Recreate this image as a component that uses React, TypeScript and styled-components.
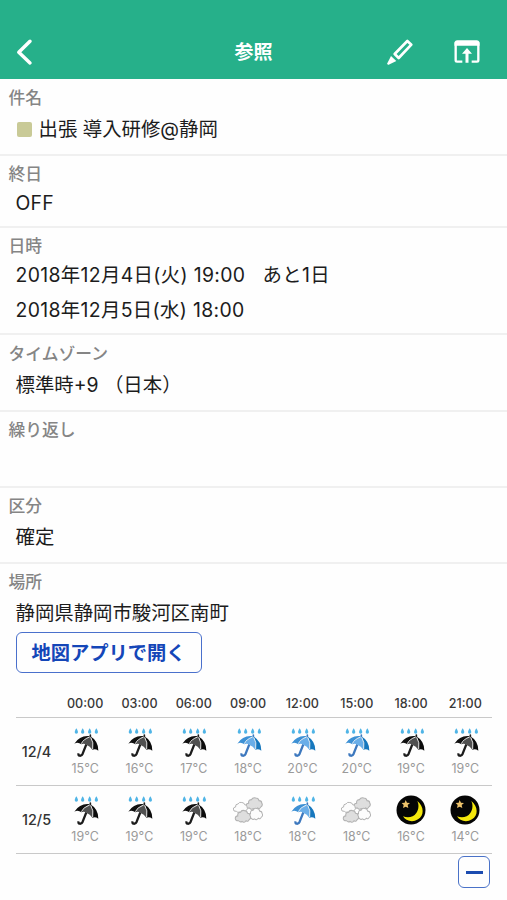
import React from "react";
import styled, { createGlobalStyle } from "styled-components";

const GlobalStyle = createGlobalStyle`
  body {
    margin: 0;
    background: #fefefe;
    color: #1c1c1c;
    font-family: Inter, "Noto Sans CJK JP", sans-serif;
  }
`;

const Screen = styled.div`
  width: 507px;
  height: 900px;
  overflow: hidden;
  background: #fefefe;
`;

const Header = styled.header`
  display: grid;
  grid-template-columns: 1fr auto 1fr;
  align-items: center;
  box-sizing: border-box;
  height: 79px;
  padding: 25px 27px 0 16px;
  background: #26b08a;
  color: #fff;
`;

const Title = styled.h1`
  margin: 2px -11px 0 0;
  font-size: 19px;
  font-weight: 700;
  line-height: 28px;
`;

const Actions = styled.div`
  display: flex;
  justify-content: flex-end;
  align-items: center;
  gap: 40px;
`;

const IconButton = styled.button`
  display: flex;
  padding: 0;
  border: 0;
  background: none;
  color: inherit;
  justify-self: start;
`;

const Section = styled.section<{ $height?: number; $top?: number }>`
  box-sizing: border-box;
  height: ${(p) => (p.$height ? `${p.$height}px` : "auto")};
  padding: ${(p) => p.$top ?? 6}px 15px 0 8.5px;
  border-bottom: ${(p) => (p.$height ? "2px solid #f0f0f0" : "0")};
`;

const Label = styled.h2`
  margin: 0;
  font-size: 16.8px;
  font-weight: 500;
  line-height: 24px;
  color: #858585;
`;

const Value = styled.div<{ $spacing?: number; $gap?: number }>`
  display: flex;
  align-items: center;
  height: 28px;
  margin: ${(p) => p.$gap ?? 5}px 0 0 7px;
  font-size: 19.4px;
  letter-spacing: ${(p) => p.$spacing ?? 0}px;
  line-height: 28px;
  white-space: pre;
`;

const Swatch = styled.span`
  width: 15px;
  height: 15px;
  margin: 0 7px 0 1px;
  border-radius: 2px;
  background: #c9ca97;
`;

const Remaining = styled.span`
  margin-left: 17px;
`;

const MapButton = styled.button`
  display: block;
  box-sizing: border-box;
  width: 186px;
  height: 41px;
  margin: 5px 0 0 7px;
  padding: 0 0 1px;
  border: 1.5px solid #4a70cc;
  border-radius: 6px;
  background: #fefefe;
  color: #1446b8;
  font-family: inherit;
  font-size: 19.3px;
  font-weight: 700;
`;

const Forecast = styled.div`
  margin: 16px 0 0 7px;
`;

const ForecastRow = styled.div<{ $head?: boolean }>`
  display: grid;
  grid-template-columns: 42px repeat(8, 1fr);
  align-items: center;
  box-sizing: border-box;
  height: ${(p) => (p.$head ? 29 : 68)}px;
  border-bottom: 1.5px solid #c9c9c9;
`;

const Hour = styled.span`
  padding-left: 1px;
  font-size: 12.6px;
  font-weight: 500;
  color: #383838;
  text-align: center;
`;

const Day = styled.span`
  font-size: 14.4px;
  font-weight: 500;
  text-align: center;
  color: #333;
`;

const Cell = styled.div`
  display: flex;
  flex-direction: column;
  align-items: center;
  gap: 4px;
  padding-top: 1px;
`;

const Temperature = styled.span`
  padding-left: 1px;
  font-size: 12.4px;
  line-height: 16px;
  letter-spacing: 0.1px;
  color: #9a9a9a;
`;

const Footer = styled.div`
  display: flex;
  justify-content: flex-end;
  padding: 2px 2px 0 0;
`;

const CollapseButton = styled.button`
  display: flex;
  align-items: center;
  justify-content: center;
  box-sizing: border-box;
  width: 32px;
  height: 32px;
  padding: 0;
  border: 1.5px solid #4a72c8;
  border-radius: 6px;
  background: #fefefe;
`;

const Minus = styled.span`
  width: 17px;
  height: 3px;
  background: #1c4cb0;
`;

type Weather = "night-rain" | "day-rain" | "cloud" | "moon";

const BackIcon = () => (
  <svg width="18" height="28" viewBox="0 0 18 28" fill="none" stroke="#fff" strokeWidth="3.5" strokeLinecap="round" strokeLinejoin="round">
    <path d="M14 3.3 2.8 14.3 14 24.9" />
  </svg>
);

const PencilIcon = () => (
  <svg width="28" height="28" viewBox="0 0 84 84" fill="none">
    <path d="M64 9 76 20 38 60 26 48Z" stroke="#fff" strokeWidth="8" strokeLinejoin="round" />
    <path d="M15 54 31 69 8 80Q3 81 4 76Z" fill="#fff" />
  </svg>
);

const OpenIcon = () => (
  <svg width="26" height="26" viewBox="0 0 78 78" fill="none">
    <path d="M25 68H9Q5 68 5 64V10M53 68H69Q73 68 73 64V10" stroke="#fff" strokeWidth="7" />
    <path d="M1.5 20V12Q2 4 10 4H68Q76 4 76.5 12V20Z" fill="#fff" />
    <path d="M39 27 54 44H43.5V71H34.5V44H24Z" fill="#fff" />
  </svg>
);

const Umbrella = ({ night }: { night: boolean }) => {
  const edge = night ? "#0c0c0c" : "#1677bd";
  const middle = night ? "#505050" : "#6aaee8";
  const left = night ? "#101010" : "#3d91d5";
  const handle = night ? "#1c1c1c" : "#3d78be";
  return (
    <svg width="30" height="30" viewBox="0 0 90 90">
      {[19, 38, 59, 79].map((x) => (
        <path key={x} d={`M${x} 4Q${x - 5} 11 ${x - 5} 15a5 5 0 0 0 10 0Q${x + 5} 11 ${x} 4Z`} fill="#4fb4e6" />
      ))}
      <path d="M61 24V31" stroke={handle} strokeWidth="5" strokeLinecap="round" />
      <path d="M49 52 38 80Q35 87 29 86Q24 85 26 79" fill="none" stroke={handle} strokeWidth="7" />
      <path d="M61 28Q31 23 13 50Q24 44 34 52Q40 38 61 28Z" fill={left} />
      <path d="M61 28Q39 37 34 52Q42 48 50 54Q60 57 67 68Q72 46 61 28Z" fill={middle} />
      <path d="M61 28Q85 42 85 71Q76 64 67 68Q72 46 61 28Z" fill={edge} />
      <path d="M59 30Q39 37 34 50M62 31Q72 46 68 66" fill="none" stroke="#f1f1f1" strokeWidth="2.6" />
    </svg>
  );
};

const CloudShape = "M13 35Q2 36 2 27Q3 20 10 20Q9 9 19 9Q23 1 32 4Q40 4 42 12Q50 12 50 19Q55 27 47 32Q44 39 37 35Q31 43 24 37Q18 41 13 35Z";

const Clouds = () => (
  <svg width="30" height="30" viewBox="0 0 90 90" stroke="#b2b2b2" strokeWidth="3.4">
    <path d={CloudShape} transform="translate(37 5) scale(.98)" fill="#dedede" />
    <path d={CloudShape} transform="translate(-1 19) scale(.86)" fill="#fcfcfc" />
    <path d={CloudShape} transform="translate(44 37) scale(.86 .94)" fill="#fcfcfc" />
    <path d={CloudShape} transform="translate(5 43) scale(.92 .98)" fill="#dedede" />
  </svg>
);

const Moon = () => (
  <svg width="30" height="30" viewBox="0 0 90 90">
    <circle cx="45" cy="45" r="43.5" fill="#050505" />
    <path d="M64 18C85 34 85 63 66 73C49 84 28 77 21 64C36 70 52 67 61 54C69 42 69 29 64 18Z" fill="#f5e80c" />
    <path d="m29 15 4 8 9 1-7 6 2 9-8-4-8 4 2-9-6-6 9-1Z" fill="#eec36c" />
  </svg>
);

const WeatherIcon = ({ kind }: { kind: Weather }) => {
  if (kind === "cloud") return <Clouds />;
  if (kind === "moon") return <Moon />;
  return <Umbrella night={kind === "night-rain"} />;
};

const hours = ["00:00", "03:00", "06:00", "09:00", "12:00", "15:00", "18:00", "21:00"];

const days: { date: string; cells: [Weather, number][] }[] = [
  {
    date: "12/4",
    cells: [
      ["night-rain", 15], ["night-rain", 16], ["night-rain", 17], ["day-rain", 18],
      ["day-rain", 20], ["day-rain", 20], ["night-rain", 19], ["night-rain", 19],
    ],
  },
  {
    date: "12/5",
    cells: [
      ["night-rain", 19], ["night-rain", 19], ["night-rain", 19], ["cloud", 18],
      ["day-rain", 18], ["cloud", 18], ["moon", 16], ["moon", 14],
    ],
  },
];

export default function App() {
  return (
    <Screen lang="ja">
      <GlobalStyle />
      <Header>
        <IconButton aria-label="戻る"><BackIcon /></IconButton>
        <Title>参照</Title>
        <Actions>
          <IconButton aria-label="編集"><PencilIcon /></IconButton>
          <IconButton aria-label="開く"><OpenIcon /></IconButton>
        </Actions>
      </Header>
      <main>
        <Section $height={77} $top={7}>
          <Label>件名</Label>
          <Value><Swatch />出張 導入研修@静岡</Value>
        </Section>
        <Section $height={72}>
          <Label>終日</Label>
          <Value $gap={3} $spacing={0.2}>OFF</Value>
        </Section>
        <Section $height={107}>
          <Label>日時</Label>
          <Value $gap={3} $spacing={0.35}>2018年12月4日(火) 19:00<Remaining>あと1日</Remaining></Value>
          <Value $gap={7} $spacing={0.35}>2018年12月5日(水) 18:00</Value>
        </Section>
        <Section $height={77} $top={7}>
          <Label>タイムゾーン</Label>
          <Value>標準時+9 （日本）</Value>
        </Section>
        <Section $height={76}>
          <Label>繰り返し</Label>
        </Section>
        <Section $height={76}>
          <Label>区分</Label>
          <Value>確定</Value>
        </Section>
        <Section>
          <Label>場所</Label>
          <Value>静岡県静岡市駿河区南町</Value>
          <MapButton>地図アプリで開く</MapButton>
          <Forecast>
            <ForecastRow $head>
              <span />
              {hours.map((h) => <Hour key={h}>{h}</Hour>)}
            </ForecastRow>
            {days.map((d) => (
              <ForecastRow key={d.date}>
                <Day>{d.date}</Day>
                {d.cells.map(([kind, temp], i) => (
                  <Cell key={i}>
                    <WeatherIcon kind={kind} />
                    <Temperature>{temp}°C</Temperature>
                  </Cell>
                ))}
              </ForecastRow>
            ))}
          </Forecast>
          <Footer>
            <CollapseButton aria-label="閉じる"><Minus /></CollapseButton>
          </Footer>
        </Section>
      </main>
    </Screen>
  );
}
